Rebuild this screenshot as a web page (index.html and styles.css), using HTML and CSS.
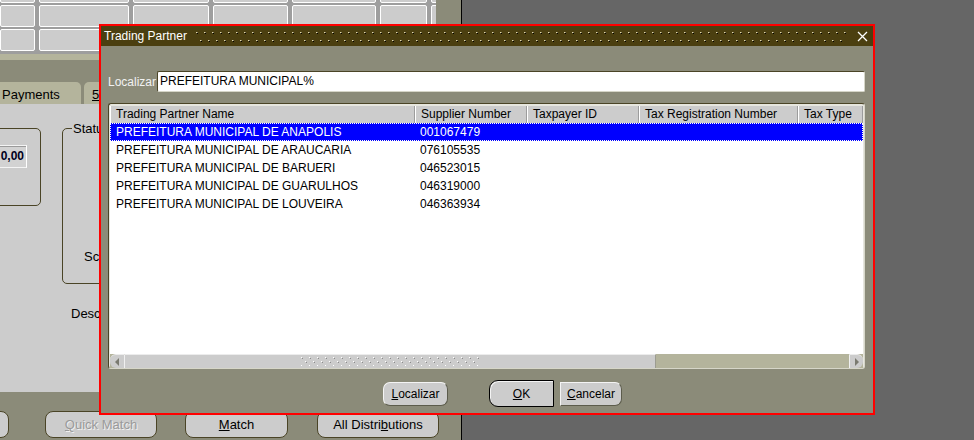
FILE: index.html
```html
<!DOCTYPE html>
<html>
<head>
<meta charset="utf-8">
<link rel="stylesheet" href="styles.css">
</head>
<body>
<div class="screen">
  <div class="app">
    <div class="grid">
      <div class="grow"><div class="cell w1"></div><div class="cell w2"></div><div class="cell w3"></div><div class="cell w4"></div><div class="cell w5"></div><div class="cell w6"></div><div class="cell w7"></div></div>
      <div class="grow"><div class="cell w1"></div><div class="cell w2"></div><div class="cell w3"></div><div class="cell w4"></div><div class="cell w5"></div><div class="cell w6"></div><div class="cell w7"></div></div>
      <div class="grow"><div class="cell w1"></div><div class="cell w2"></div><div class="cell w3"></div><div class="cell w4"></div><div class="cell w5"></div><div class="cell w6"></div><div class="cell w7"></div></div>
    </div>
    <div class="band"></div>
    <div class="gapzone"></div>
    <div class="tabs">
      <div class="tab tab-first">Payments</div>
      <div class="tab tab-next"><u>5</u></div>
    </div>
    <div class="panel">
      <div class="groups">
        <div class="box1"><div class="amount">0,00</div></div>
        <div class="box2"><span class="legend">Status</span><div class="sc">Sc</div></div>
      </div>
      <div class="desc">Desc</div>
    </div>
    <div class="actions">
      <div class="abtn partial"></div>
      <div class="abtn quick disabled"><u>Q</u>uick Match</div>
      <div class="abtn match"><u>M</u>atch</div>
      <div class="abtn alld">All Distri<u>b</u>utions</div>
    </div>
  </div>
  <div class="desktop"></div>

  <div class="dialog">
    <div class="titlebar">
      <span class="title">Trading Partner</span>
      <svg class="tgrip" height="11">
        <defs>
          <pattern id="tdots" width="8" height="16" patternUnits="userSpaceOnUse">
            <rect x="0" y="1" width="1" height="1" fill="#e0d8b0"/>
            <rect x="1" y="1" width="1" height="1" fill="#8c8460"/>
            <rect x="1" y="2" width="1" height="1" fill="#000"/>
            <rect x="4" y="9" width="1" height="1" fill="#e0d8b0"/>
            <rect x="5" y="9" width="1" height="1" fill="#8c8460"/>
            <rect x="5" y="10" width="1" height="1" fill="#000"/>
          </pattern>
        </defs>
        <rect x="0" y="0" width="100%" height="11" fill="url(#tdots)"/>
      </svg>
      <svg class="close" width="11" height="11" viewBox="0 0 11 11">
        <path d="M1 1 L10 10 M10 1 L1 10" stroke="#fff" stroke-width="1.3" fill="none"/>
      </svg>
    </div>
    <div class="dbody">
      <div class="search">
        <span class="slabel">Localizar</span>
        <div class="sinput">PREFEITURA MUNICIPAL%</div>
      </div>
      <div class="table">
        <div class="thead">
          <div class="th">Trading Partner Name</div>
          <div class="th">Supplier Number</div>
          <div class="th">Taxpayer ID</div>
          <div class="th">Tax Registration Number</div>
          <div class="th">Tax Type</div>
        </div>
        <div class="tbody">
          <div class="tr selected"><div class="td">PREFEITURA MUNICIPAL DE ANAPOLIS</div><div class="td">001067479</div><div class="td"></div><div class="td"></div><div class="td"></div></div>
          <div class="tr"><div class="td">PREFEITURA MUNICIPAL DE ARAUCARIA</div><div class="td">076105535</div><div class="td"></div><div class="td"></div><div class="td"></div></div>
          <div class="tr"><div class="td">PREFEITURA MUNICIPAL DE BARUERI</div><div class="td">046523015</div><div class="td"></div><div class="td"></div><div class="td"></div></div>
          <div class="tr"><div class="td">PREFEITURA MUNICIPAL DE GUARULHOS</div><div class="td">046319000</div><div class="td"></div><div class="td"></div><div class="td"></div></div>
          <div class="tr"><div class="td">PREFEITURA MUNICIPAL DE LOUVEIRA</div><div class="td">046363934</div><div class="td"></div><div class="td"></div><div class="td"></div></div>
        </div>
        <div class="hscroll">
          <div class="arrow arrow-left"><svg width="6" height="8" viewBox="0 0 6 8"><path d="M5 0 L1 4 L5 8 Z" fill="#7a7a70"/></svg></div>
          <div class="thumb">
            <svg class="sgrip" width="180" height="9">
              <defs>
                <pattern id="sdots" width="8" height="8" patternUnits="userSpaceOnUse">
                  <rect x="0" y="0" width="1" height="1" fill="#ffffff"/>
                  <rect x="1" y="1" width="1" height="1" fill="#8c8c8c"/>
                  <rect x="4" y="4" width="1" height="1" fill="#ffffff"/>
                  <rect x="5" y="5" width="1" height="1" fill="#8c8c8c"/>
                </pattern>
              </defs>
              <rect x="0" y="0" width="180" height="9" fill="url(#sdots)"/>
            </svg>
          </div>
          <div class="track"></div>
          <div class="arrow arrow-right"><svg width="6" height="8" viewBox="0 0 6 8"><path d="M1 0 L5 4 L1 8 Z" fill="#7a7a70"/></svg></div>
        </div>
      </div>
      <div class="buttons">
        <div class="dbtn b-find"><u>L</u>ocalizar</div>
        <div class="dbtn b-ok"><u>O</u>K</div>
        <div class="dbtn b-cancel"><u>C</u>ancelar</div>
      </div>
    </div>
  </div>
</div>
</body>
</html>
```

FILE: styles.css
```css
html, body {
  margin: 0;
  padding: 0;
  background: #666666;
}
.screen {
  position: relative;
  width: 974px;
  height: 440px;
  overflow: hidden;
  display: flex;
  background: #666666;
  font-family: "Liberation Sans", Arial, sans-serif;
  font-size: 12px;
  color: #000;
}
u { text-decoration: underline; text-underline-offset: 1px; }

/* background application window */
.app {
  flex: none;
  width: 461px;
  height: 440px;
  border-right: 1px solid #000;
  background: #8b8b79;
  display: flex;
  flex-direction: column;
  overflow: hidden;
}
.grid {
  flex: none;
  width: 436px;
  background: #9e9e9e;
  display: flex;
  flex-direction: column;
  gap: 2px;
  padding-bottom: 3px;
  overflow: hidden;
}
.grow {
  flex: none;
  display: flex;
  gap: 4px;
  height: 22px;
}
.grow:first-child { margin-top: -19px; }
.cell {
  flex: none;
  box-sizing: border-box;
  height: 22px;
  background: #cccccc;
  border: 1px solid #ffffff;
  border-radius: 2px;
}
.w1 { width: 35px; }
.w2 { width: 90px; }
.w3 { width: 76px; }
.w4 { width: 75px; }
.w5 { width: 84px; }
.w6 { width: 47px; }
.w7 { width: 8px; }
.band {
  flex: none;
  width: 436px;
  height: 6px;
  background: #b4b49c;
}
.gapzone {
  flex: none;
  height: 22px;
}
.tabs {
  flex: none;
  height: 22px;
  display: flex;
  gap: 3px;
}
.tab {
  flex: none;
  background: #b4b49c;
  display: flex;
  align-items: center;
  box-sizing: border-box;
  font-size: 13px;
  padding-top: 2px;
}
.tab-first {
  width: 81px;
  padding-left: 2px;
  border-radius: 0 5px 0 0;
}
.tab-next {
  width: 120px;
  padding-left: 8px;
  border-radius: 5px 0 0 0;
}
.panel {
  flex: none;
  width: 436px;
  height: 288px;
  box-sizing: border-box;
  background: #cccccc;
  padding-top: 24px;
}
.groups {
  display: flex;
  align-items: flex-start;
}
.box1 {
  flex: none;
  width: 52px;
  height: 78px;
  margin-left: -11px;
  box-sizing: border-box;
  border: 1px solid #4a4426;
  border-radius: 5px;
  padding-top: 16px;
}
.amount {
  width: 37px;
  height: 23px;
  box-sizing: border-box;
  border: 1px solid #f4f4f4;
  border-right-color: #ffffff;
  box-shadow: inset 1px 1px 0 #9a9a9a;
  background: #d2d2d2;
  font-weight: bold;
  text-align: right;
  padding-right: 2px;
  line-height: 21px;
  color: #000020;
}
.box2 {
  flex: none;
  width: 300px;
  height: 156px;
  margin-left: 21px;
  box-sizing: border-box;
  border: 1px solid #4a4426;
  border-radius: 5px;
  padding-left: 9px;
}
.legend {
  display: block;
  width: fit-content;
  margin-top: -7px;
  padding: 0 1px;
  background: #cccccc;
  line-height: 14px;
  font-size: 13px;
}
.sc {
  margin-top: 113px;
  padding-left: 12px;
  font-size: 13px;
  line-height: 15px;
}
.desc {
  margin-top: 22px;
  padding-left: 71px;
  font-size: 13px;
}
.actions {
  flex: 1;
  display: flex;
  align-items: flex-start;
  padding-top: 19px;
}
.abtn {
  flex: none;
  box-sizing: border-box;
  height: 27px;
  border: 1px solid #4a4426;
  border-radius: 8px;
  background: #cccccc;
  display: flex;
  align-items: center;
  justify-content: center;
  font-size: 13px;
}
.partial { width: 30px; margin-left: -21px; }
.quick { width: 112px; margin-left: 36px; }
.match { width: 103px; margin-left: 28px; }
.alld { width: 122px; margin-left: 29px; }
.disabled {
  color: #9a9a9a;
  text-shadow: 1px 1px 0 #f0f0f0;
}
.desktop {
  flex: 1;
  background: #666666;
}

/* dialog */
.dialog {
  position: absolute;
  left: 99px;
  top: 24px;
  width: 776px;
  height: 391px;
  box-sizing: border-box;
  border: 2px solid #ff0000;
  background: #8b8b79;
  display: flex;
  flex-direction: column;
}
.titlebar {
  flex: none;
  height: 20px;
  background: #4b3f10;
  display: flex;
  align-items: center;
}
.title {
  flex: none;
  color: #ffffff;
  padding-left: 3px;
  font-size: 12px;
  line-height: 20px;
}
.tgrip {
  flex: 1;
  align-self: flex-start;
  margin-top: 5px;
  margin-left: 9px;
  margin-right: 10px;
}
.close {
  flex: none;
  margin-right: 5px;
}
.dbody {
  flex: 1;
  display: flex;
  flex-direction: column;
  padding: 25px 8px 0 7px;
}
.search {
  flex: none;
  display: flex;
  height: 21px;
  align-items: center;
}
.slabel {
  flex: none;
  width: 49px;
  color: #f2f2f2;
  font-size: 12px;
}
.sinput {
  flex: 1;
  height: 21px;
  box-sizing: border-box;
  background: #ffffff;
  border: 1px solid;
  border-color: #4a4426 #d6d6c8 #d6d6c8 #4a4426;
  border-radius: 2px;
  padding-left: 2px;
  line-height: 19px;
}
.table {
  flex: none;
  margin-top: 11px;
  height: 266px;
  box-sizing: border-box;
  border: 1px solid;
  border-color: #4a4426 #d6d6c8 #d6d6c8 #4a4426;
  border-radius: 3px;
  background: #e6e6de;
  padding: 2px 1px 0 1px;
  display: flex;
  flex-direction: column;
}
.thead, .tr {
  display: grid;
  grid-template-columns: 305px 112px 112px 159px 65px;
}
.thead {
  flex: none;
  height: 17px;
  background: #cccccc;
}
.th {
  box-sizing: border-box;
  border-left: 1px solid #ffffff;
  border-right: 1px solid #9c9c9c;
  padding-left: 5px;
  line-height: 17px;
  white-space: nowrap;
  overflow: hidden;
  color: #000;
}
.tbody {
  flex: 1;
  background: #ffffff;
}
.tr {
  height: 18px;
  line-height: 18px;
}
.td {
  padding-left: 6px;
  white-space: nowrap;
  overflow: hidden;
}
.td + .td { padding-left: 5px; }
.selected {
  background: #0000ff;
  color: #ffffff;
  outline: 1px dotted #ffffff;
  outline-offset: -1px;
}
.hscroll {
  flex: none;
  height: 14px;
  display: flex;
  background: #b4b49c;
}
.arrow {
  flex: none;
  box-sizing: border-box;
  background: #cccccc;
  display: flex;
  align-items: center;
  justify-content: center;
  border-top: 1px solid #ececec;
}
.arrow-left {
  width: 15px;
  border-radius: 6px 0 0 6px;
  border-right: 1px solid #f0f0f0;
}
.arrow-right {
  width: 14px;
  border-radius: 0 6px 6px 0;
  border-left: 1px solid #f0f0f0;
}
.thumb {
  flex: none;
  width: 531px;
  box-sizing: border-box;
  background: #cccccc;
  border-top: 1px solid #ececec;
  border-right: 1px solid #9c9c90;
  display: flex;
  align-items: center;
  justify-content: center;
}
.sgrip { display: block; margin-left: 2px; }
.track { flex: 1; }
.buttons {
  flex: none;
  margin-top: 11px;
  height: 27px;
  display: flex;
  align-items: center;
  padding-left: 275px;
}
.dbtn {
  flex: none;
  box-sizing: border-box;
  background: #cccccc;
  display: flex;
  align-items: center;
  justify-content: center;
  font-size: 12px;
}
.b-find {
  width: 65px;
  height: 24px;
  border: 1px solid;
  border-color: #f4f4f4 #5c5c4c #5c5c4c #f4f4f4;
  border-radius: 7px;
}
.b-ok {
  width: 65px;
  height: 27px;
  margin-left: 41px;
  border: 1px solid #000000;
  border-radius: 9px 0 0 9px;
  box-shadow: inset 1px 1px 0 #f4f4f4;
}
.b-cancel {
  width: 62px;
  height: 24px;
  margin-left: 6px;
  border: 1px solid;
  border-color: #f4f4f4 #5c5c4c #5c5c4c #f4f4f4;
  border-radius: 0 7px 7px 0;
}
```
